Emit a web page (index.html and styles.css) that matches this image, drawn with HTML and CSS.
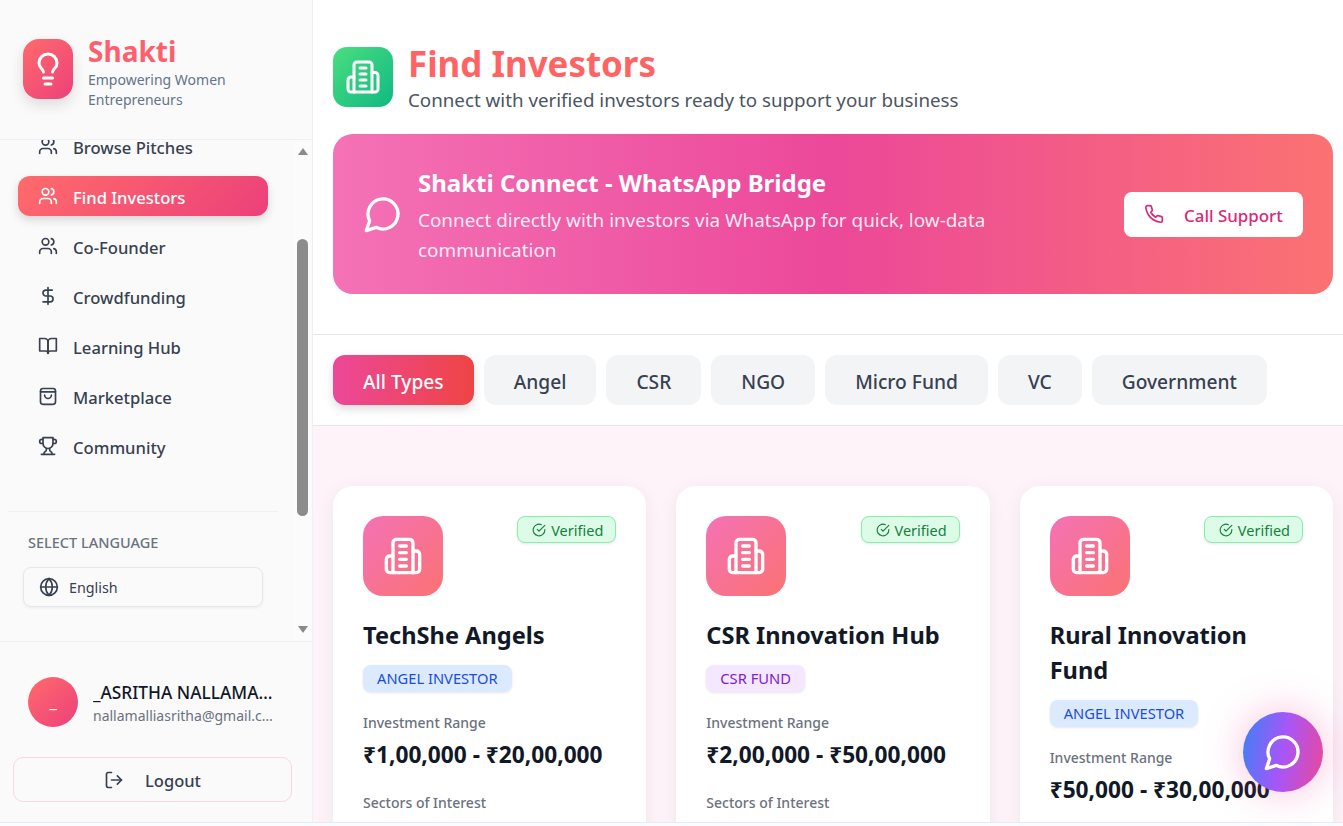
FILE: index.html
```html
<!DOCTYPE html>
<html lang="en">
<head>
<meta charset="utf-8">
<title>Find Investors</title>
<link rel="stylesheet" href="styles.css">
</head>
<body>
<svg class="defs" aria-hidden="true">
  <symbol id="i-bulb" viewBox="0 0 24 24"><path d="M15 14c.2-1 .7-1.7 1.5-2.5 1-.9 1.5-2.2 1.5-3.5A6 6 0 0 0 6 8c0 1 .2 2.2 1.5 3.5.7.7 1.3 1.5 1.5 2.5"/><path d="M9 18h6"/><path d="M10 22h4"/></symbol>
  <symbol id="i-users" viewBox="0 0 24 24"><path d="M16 21v-2a4 4 0 0 0-4-4H6a4 4 0 0 0-4 4v2"/><circle cx="9" cy="7" r="4"/><path d="M22 21v-2a4 4 0 0 0-3-3.87"/><path d="M16 3.13a4 4 0 0 1 0 7.75"/></symbol>
  <symbol id="i-dollar" viewBox="0 0 24 24"><path d="M12 2v20"/><path d="M17 5H9.5a3.5 3.5 0 0 0 0 7h5a3.5 3.5 0 0 1 0 7H6"/></symbol>
  <symbol id="i-book" viewBox="0 0 24 24"><path d="M2 3h6a4 4 0 0 1 4 4v14a3 3 0 0 0-3-3H2z"/><path d="M22 3h-6a4 4 0 0 0-4 4v14a3 3 0 0 1 3-3h7z"/></symbol>
  <symbol id="i-bag" viewBox="0 0 24 24"><rect x="3" y="3" width="18" height="19" rx="3"/><path d="M3 7h18"/><path d="M16 11a4 4 0 0 1-8 0"/></symbol>
  <symbol id="i-trophy" viewBox="0 0 24 24"><path d="M6 9H4.5a2.5 2.5 0 0 1 0-5H6"/><path d="M18 9h1.5a2.5 2.5 0 0 0 0-5H18"/><path d="M4 22h16"/><path d="M10 14.66V17c0 .55-.47.98-.97 1.21C7.85 18.75 7 20.24 7 22"/><path d="M14 14.66V17c0 .55.47.98.97 1.21C16.15 18.75 17 20.24 17 22"/><path d="M18 2H6v7a6 6 0 0 0 12 0V2Z"/></symbol>
  <symbol id="i-globe" viewBox="0 0 24 24"><circle cx="12" cy="12" r="10"/><path d="M12 2a14.5 14.5 0 0 0 0 20 14.5 14.5 0 0 0 0-20"/><path d="M2 12h20"/></symbol>
  <symbol id="i-logout" viewBox="0 0 24 24"><path d="M9 21H5a2 2 0 0 1-2-2V5a2 2 0 0 1 2-2h4"/><path d="m16 17 5-5-5-5"/><path d="M21 12H9"/></symbol>
  <symbol id="i-building" viewBox="0 0 24 24"><path d="M6 22V4a2 2 0 0 1 2-2h8a2 2 0 0 1 2 2v18Z"/><path d="M6 12H4a2 2 0 0 0-2 2v6a2 2 0 0 0 2 2h2"/><path d="M18 9h2a2 2 0 0 1 2 2v9a2 2 0 0 1-2 2h-2"/><path d="M10 6h4"/><path d="M10 10h4"/><path d="M10 14h4"/><path d="M10 18h4"/></symbol>
  <symbol id="i-chat" viewBox="0 0 24 24"><path d="M7.9 20A9 9 0 1 0 4 16.1L2 22Z"/></symbol>
  <symbol id="i-phone" viewBox="0 0 24 24"><path d="M22 16.92v3a2 2 0 0 1-2.18 2 19.79 19.79 0 0 1-8.63-3.07 19.5 19.5 0 0 1-6-6 19.79 19.79 0 0 1-3.07-8.67A2 2 0 0 1 4.11 2h3a2 2 0 0 1 2 1.72 12.84 12.84 0 0 0 .7 2.81 2 2 0 0 1-.45 2.11L8.09 9.91a16 16 0 0 0 6 6l1.27-1.27a2 2 0 0 1 2.11-.45 12.84 12.84 0 0 0 2.81.7A2 2 0 0 1 22 16.92z"/></symbol>
  <symbol id="i-check" viewBox="0 0 24 24"><path d="M22 11.08V12a10 10 0 1 1-5.93-9.14"/><path d="m9 11 3 3L22 4"/></symbol>
</svg>

<div class="app">
  <aside class="sidebar">
    <header class="brand">
      <div class="brand-icon"><svg class="ico ico-36"><use href="#i-bulb"/></svg></div>
      <div class="brand-text">
        <div class="brand-name">Shakti</div>
        <div class="brand-tag">Empowering Women Entrepreneurs</div>
      </div>
    </header>

    <div class="side-scroll">
      <nav class="nav">
        <a class="nav-item"><svg class="ico ico-20"><use href="#i-users"/></svg><span class="nav-label">Browse Pitches</span></a>
        <a class="nav-item active"><svg class="ico ico-20"><use href="#i-users"/></svg><span class="nav-label">Find Investors</span></a>
        <a class="nav-item"><svg class="ico ico-20"><use href="#i-users"/></svg><span class="nav-label">Co-Founder</span></a>
        <a class="nav-item"><svg class="ico ico-20"><use href="#i-dollar"/></svg><span class="nav-label">Crowdfunding</span></a>
        <a class="nav-item"><svg class="ico ico-20"><use href="#i-book"/></svg><span class="nav-label">Learning Hub</span></a>
        <a class="nav-item"><svg class="ico ico-20"><use href="#i-bag"/></svg><span class="nav-label">Marketplace</span></a>
        <a class="nav-item"><svg class="ico ico-20"><use href="#i-trophy"/></svg><span class="nav-label">Community</span></a>
      </nav>
      <div class="lang">
        <div class="lang-label">SELECT LANGUAGE</div>
        <div class="lang-select"><svg class="ico ico-20"><use href="#i-globe"/></svg>English</div>
      </div>
      <div class="scrollbar">
        <span class="arrow arrow-up"></span>
        <span class="thumb"></span>
        <span class="arrow arrow-down"></span>
      </div>
    </div>

    <footer class="side-foot">
      <div class="user">
        <div class="avatar">_</div>
        <div class="user-text">
          <div class="user-name">_ASRITHA NALLAMALLI</div>
          <div class="user-mail">nallamalliasritha@gmail.com</div>
        </div>
      </div>
      <button class="logout"><svg class="ico ico-20"><use href="#i-logout"/></svg><span class="logout-label">Logout</span></button>
    </footer>
  </aside>

  <main class="main">
    <section class="top">
      <div class="title-row">
        <div class="title-icon"><svg class="ico ico-36"><use href="#i-building"/></svg></div>
        <div>
          <h1 class="title">Find Investors</h1>
          <p class="subtitle">Connect with verified investors ready to support your business</p>
        </div>
      </div>
      <div class="banner">
        <svg class="ico ico-40"><use href="#i-chat"/></svg>
        <div class="banner-text">
          <h2 class="banner-title">Shakti Connect - WhatsApp Bridge</h2>
          <p class="banner-desc">Connect directly with investors via WhatsApp for quick, low-data communication</p>
        </div>
        <button class="call"><svg class="ico ico-20"><use href="#i-phone"/></svg><span class="call-label">Call Support</span></button>
      </div>
    </section>

    <section class="filters">
      <button class="chip chip-on">All Types</button>
      <button class="chip">Angel</button>
      <button class="chip">CSR</button>
      <button class="chip">NGO</button>
      <button class="chip">Micro Fund</button>
      <button class="chip">VC</button>
      <button class="chip">Government</button>
    </section>

    <section class="cards">
      <article class="card">
        <div class="card-top">
          <div class="card-icon"><svg class="ico ico-40"><use href="#i-building"/></svg></div>
          <span class="verified"><svg class="ico ico-14"><use href="#i-check"/></svg>Verified</span>
        </div>
        <h3 class="card-name">TechShe Angels</h3>
        <span class="tag tag-blue">ANGEL INVESTOR</span>
        <div class="label">Investment Range</div>
        <div class="range">₹1,00,000 - ₹20,00,000</div>
        <div class="label label-sectors">Sectors of Interest</div>
      </article>
      <article class="card">
        <div class="card-top">
          <div class="card-icon"><svg class="ico ico-40"><use href="#i-building"/></svg></div>
          <span class="verified"><svg class="ico ico-14"><use href="#i-check"/></svg>Verified</span>
        </div>
        <h3 class="card-name">CSR Innovation Hub</h3>
        <span class="tag tag-purple">CSR FUND</span>
        <div class="label">Investment Range</div>
        <div class="range">₹2,00,000 - ₹50,00,000</div>
        <div class="label label-sectors">Sectors of Interest</div>
      </article>
      <article class="card">
        <div class="card-top">
          <div class="card-icon"><svg class="ico ico-40"><use href="#i-building"/></svg></div>
          <span class="verified"><svg class="ico ico-14"><use href="#i-check"/></svg>Verified</span>
        </div>
        <h3 class="card-name">Rural Innovation Fund</h3>
        <span class="tag tag-blue">ANGEL INVESTOR</span>
        <div class="label">Investment Range</div>
        <div class="range">₹50,000 - ₹30,00,000</div>
        <div class="label label-sectors">Sectors of Interest</div>
      </article>
    </section>
  </main>
</div>

<button class="fab"><svg class="ico ico-40"><use href="#i-chat"/></svg></button>
<div class="edge"></div>
</body>
</html>
```

FILE: styles.css
```css
* { box-sizing: border-box; }
html, body { margin: 0; height: 100%; overflow: hidden; }
body { font-family: "Noto Sans", sans-serif; color: #111827; background: #fff; position: relative; }
h1, h2, h3, p { margin: 0; }
button { font-family: inherit; border: 0; cursor: pointer; }
.defs { display: none; }

.ico { fill: none; stroke: currentColor; stroke-width: 2; stroke-linecap: round; stroke-linejoin: round; flex: none; }
.ico-14 { width: 14px; height: 14px; }
.ico-20 { width: 20px; height: 20px; }
.ico-36 { width: 36px; height: 36px; }
.ico-40 { width: 40px; height: 40px; }

.app { display: flex; height: 100%; }

/* sidebar */
.sidebar { width: 313px; flex: none; display: flex; flex-direction: column; background: #fafafa; border-right: 1px solid #f0f0f0; height: 100%; }
.brand { height: 140px; flex: none; display: flex; align-items: center; gap: 15px; padding: 0 23px; border-bottom: 1px solid #f0f0f0; }
.brand-icon { width: 50px; height: 60px; flex: none; margin-top: -2px; border-radius: 16px; display: flex; align-items: center; justify-content: center; color: #fff; background: linear-gradient(135deg, #ff6b6b, #ec407a); box-shadow: 0 6px 14px rgba(0,0,0,.12); }
.brand-text { padding-top: 5px; }
.brand-name { font-size: 28px; line-height: 34px; font-weight: 700; color: #ff5f6d; }
.brand-tag { font-size: 14px; line-height: 20px; color: #64748b; margin-top: 2px; width: 170px; }

.side-scroll { flex: 1; min-height: 0; position: relative; overflow: hidden; }
.nav { display: flex; flex-direction: column; gap: 10px; width: 250px; margin: -14px 0 0 18px; }
.nav-item { height: 40px; display: flex; align-items: center; gap: 15px; padding: 0 20px; border-radius: 12px; font-size: 16.6px; font-weight: 500; color: #374151; }
.nav-label { padding-top: 3px; }
.nav-item.active { color: #fff; background: linear-gradient(135deg, #ff6b6b, #ec407a); box-shadow: 0 4px 10px rgba(0,0,0,.14); }

.lang { margin: 45px 34px 0 8px; border-top: 1px solid #f0f0f0; padding: 20px 0 0 15px; }
.lang-label { font-size: 14.5px; line-height: 20px; font-weight: 500; color: #6b7280; padding-left: 5px; }
.lang-select { margin-top: 15px; width: 240px; height: 40px; display: flex; align-items: center; gap: 10px; padding: 0 15px; font-size: 14.3px; color: #374151; border: 1px solid #e5e7eb; border-radius: 8px; box-shadow: 0 1px 3px rgba(0,0,0,.06); }

.scrollbar { position: absolute; top: 0; right: 1px; bottom: 0; width: 17px; background: #fbfbfb; display: flex; flex-direction: column; align-items: center; }
.arrow { width: 0; height: 0; border-left: 5px solid transparent; border-right: 5px solid transparent; }
.arrow-up { border-bottom: 7px solid #8a8a8a; margin-top: 8px; }
.arrow-down { border-top: 7px solid #8a8a8a; margin-top: 110px; }
.thumb { width: 11px; height: 277px; margin-top: 84px; border-radius: 6px; background: #8c8c8c; }

.side-foot { height: 185px; flex: none; border-top: 1px solid #f0f0f0; padding: 35px 20px 0 13px; }
.user { display: flex; align-items: center; gap: 15px; padding-left: 15px; }
.avatar { width: 50px; height: 50px; flex: none; border-radius: 50%; color: #fff; font-size: 16px; display: flex; align-items: center; justify-content: center; background: linear-gradient(135deg, #ff6b6b, #ec407a); }
.user-text { min-width: 0; width: 181px; padding-top: 3px; }
.user-name { font-size: 17.3px; line-height: 24px; font-weight: 500; color: #111827; white-space: nowrap; overflow: hidden; text-overflow: ellipsis; }
.user-mail { font-size: 14px; line-height: 20px; margin-top: 1px; color: #6b7280; white-space: nowrap; overflow: hidden; text-overflow: ellipsis; }
.logout { margin-top: 30px; width: 279px; height: 45px; display: flex; align-items: center; justify-content: center; gap: 21px; font-size: 16.5px; font-weight: 500; color: #374151; background: #fafafa; border: 1px solid #fbd5e8; border-radius: 10px; }
.logout-label { padding-top: 2px; }

/* main */
.main { flex: 1; min-width: 0; height: 100%; overflow: hidden; background: #fdf3f9; }
.top { background: #fff; padding: 47px 10px 40px 20px; border-bottom: 1px solid #e5e7eb; }
.title-row { display: flex; align-items: flex-start; gap: 15px; }
.title-icon { width: 60px; height: 60px; flex: none; border-radius: 14px; color: #fff; display: flex; align-items: center; justify-content: center; background: linear-gradient(135deg, #4ade80, #10b981); }
.title { font-size: 34.9px; line-height: 34px; font-weight: 700; color: #ff6464; }
.subtitle { font-size: 18.75px; line-height: 24px; color: #4b5563; margin-top: 7px; }
.banner { margin-top: 22px; height: 160px; display: flex; align-items: center; gap: 15px; padding: 0 30px; border-radius: 20px; color: #fff; background: linear-gradient(90deg, #f472b6, #ec4899 50%, #fb7272); }
.banner-text { flex: 1; min-width: 0; }
.banner-title { font-size: 24px; line-height: 32px; font-weight: 700; margin-top: 4px; }
.banner-desc { font-size: 18.9px; line-height: 30px; color: rgba(255,255,255,.9); margin-top: 6px; width: 640px; }
.call { width: 179px; height: 45px; flex: none; display: flex; align-items: center; gap: 20px; padding: 0 20px; font-size: 16.9px; font-weight: 500; color: #db2777; background: #fff; border-radius: 8px; }
.call-label { padding-top: 2px; }

.filters { display: flex; gap: 10px; height: 91px; padding: 20px 10px 20px 20px; background: #fff; border-bottom: 1px solid #e5e7eb; }
.chip { height: 50px; padding: 2px 30px 0; border-radius: 12px; font-size: 19.2px; font-weight: 500; color: #374151; background: #f3f4f6; }
.chip-on { color: #fff; background: linear-gradient(90deg, #ec4899, #ef4444); box-shadow: 0 4px 10px rgba(0,0,0,.14); }

.cards { display: grid; grid-template-columns: repeat(3, 1fr); gap: 30px; padding: 60px 10px 0 20px; }
.card { background: #fff; border-radius: 20px; padding: 30px; height: 500px; box-shadow: 0 4px 20px rgba(0,0,0,.06); }
.card-top { display: flex; justify-content: space-between; align-items: flex-start; }
.card-icon { width: 80px; height: 80px; border-radius: 20px; color: #fff; display: flex; align-items: center; justify-content: center; background: linear-gradient(135deg, #f472b6, #fb7272); }
.verified { height: 27px; display: inline-flex; align-items: center; gap: 5px; padding: 0 12px 0 14px; font-size: 14.5px; color: #15803d; background: #dcfce7; border: 1px solid #86efac; border-radius: 8px; box-shadow: 0 1px 3px rgba(0,0,0,.1); }
.card-name { font-size: 23.6px; line-height: 35px; font-weight: 700; color: #111827; margin-top: 22px; }
.tag { display: table; height: 27px; line-height: 27px; padding: 0 14px; margin-top: 12px; border-radius: 8px; font-size: 14.7px; box-shadow: 0 1px 3px rgba(0,0,0,.1); }
.tag-blue { color: #1d4ed8; background: #dbeafe; }
.tag-purple { color: #7e22ce; background: #f3e8ff; }
.label { font-size: 14px; line-height: 20px; font-weight: 500; color: #6b7280; margin-top: 21px; }
.range { font-size: 22.7px; line-height: 28px; font-weight: 700; color: #111827; margin-top: 8px; }
.label-sectors { margin-top: 24px; }

.fab { position: absolute; left: 1243px; top: 712px; width: 80px; height: 80px; padding: 0; border-radius: 50%; color: #fff; display: flex; align-items: center; justify-content: center; background: linear-gradient(100deg, #3b82f6, #a855f7 50%, #ec4899); box-shadow: 0 0 40px rgba(236,72,153,.35); }
.edge { position: absolute; left: 0; right: 0; bottom: 0; height: 4px; background: #fbfcff; border-top: 1px solid #e5eaf6; }
```
